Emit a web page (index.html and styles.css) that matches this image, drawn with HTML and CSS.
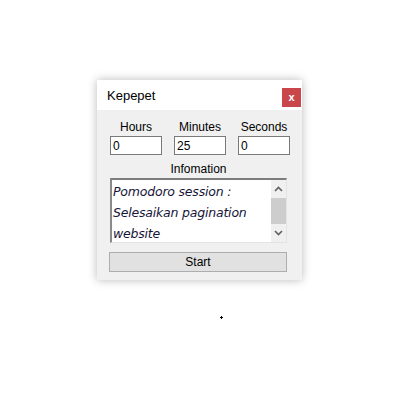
FILE: index.html
```html
<!DOCTYPE html>
<html lang="en">
  <head>
    <meta charset="UTF-8" />
    <meta name="viewport" content="width=device-width, initial-scale=1.0" />
    <title>Kepepet</title>
    <link rel="stylesheet" href="styles.css">
  </head>
  <body>
    <div class="window">
      <!-- Title bar -->
      <div class="titlebar">
        <span class="title">Kepepet</span>
        <button class="close">x</button>
      </div>

      <div class="content">
        <div class="time-grid">
          <label>Hours</label>
          <label>Minutes</label>
          <label>Seconds</label>
          <div class="field">0</div>
          <div class="field">25</div>
          <div class="field">0</div>
        </div>

        <div class="info-label">Infomation</div>
        <div class="info-box">
          <div class="info-text">Pomodoro session :<br>Selesaikan pagination<br>website</div>
          <div class="scrollbar">
            <div class="arrow">
              <svg width="9" height="6" viewBox="0 0 9 6"><path d="M1 5 L4.5 1.5 L8 5" fill="none" stroke="#606060" stroke-width="1.6"/></svg>
            </div>
            <div class="thumb"></div>
            <div class="track"></div>
            <div class="arrow">
              <svg width="9" height="6" viewBox="0 0 9 6"><path d="M1 1 L4.5 4.5 L8 1" fill="none" stroke="#606060" stroke-width="1.6"/></svg>
            </div>
          </div>
        </div>

        <button class="start">Start</button>
      </div>
    </div>

    <div class="cursor"></div>
  </body>
</html>
```

FILE: styles.css
```css
/* Basic styling */
body {
  font-family: "Liberation Sans", Arial, sans-serif;
  font-size: 12px;
  background-color: #fff;
  color: #000;
  margin: 0;
  padding: 0;
  width: 400px;
  height: 400px;
  position: relative;
}

.window {
  margin: 80px 0 0 97px;
  width: 205px;
  background-color: #f0f0f0;
  box-shadow: 0 0 9px rgba(0, 0, 0, 0.28);
}

.titlebar {
  height: 30px;
  background-color: #fff;
  display: flex;
  justify-content: space-between;
  padding-left: 10px;
  padding-right: 1px;
}

.title {
  font-size: 13px;
  line-height: 32px;
}

.close {
  margin-top: 8px;
  width: 19px;
  height: 19px;
  border: none;
  padding: 0;
  background-color: #c9474a;
  color: #fff;
  font-family: "Liberation Sans", Arial, sans-serif;
  font-size: 11px;
  font-weight: bold;
  line-height: 17px;
}

.content {
  padding: 10px 15px 8px 13px;
}

.time-grid {
  display: grid;
  grid-template-columns: repeat(3, 52px);
  column-gap: 12px;
  row-gap: 2px;
}

.time-grid label {
  text-align: center;
  line-height: 14px;
}

.field {
  height: 17px;
  border: 1px solid #7a7a7a;
  background-color: #fff;
  padding-left: 2px;
  line-height: 18px;
}

.info-label {
  text-align: center;
  line-height: 14px;
  margin-top: 7px;
}

.info-box {
  margin-top: 2px;
  width: 174px;
  height: 62px;
  display: flex;
  background-color: #fff;
  border-top: 2px solid #7d7d7d;
  border-left: 2px solid #8a8a8a;
  border-right: 1px solid #e3e3e3;
  border-bottom: 1px solid #e3e3e3;
}

.info-text {
  flex: 1;
  padding: 1px 0 0 1px;
  font-family: "DejaVu Sans", sans-serif;
  font-style: italic;
  font-size: 12.5px;
  line-height: 21px;
  color: #151538;
  letter-spacing: -0.2px;
}

.scrollbar {
  width: 15px;
  display: flex;
  flex-direction: column;
  background-color: #f0f0f0;
}

.arrow {
  height: 18px;
  display: flex;
  align-items: center;
  justify-content: center;
}

.thumb {
  height: 27px;
  background-color: #cdcdcd;
}

.track {
  flex: 1;
}

.start {
  display: block;
  margin-top: 9px;
  margin-left: -1px;
  width: 178px;
  height: 20px;
  padding: 0;
  border: 1px solid #adadad;
  background-color: #e1e1e1;
  font-family: "Liberation Sans", Arial, sans-serif;
  font-size: 12px;
  color: #000;
}

/* mouse pointer left on the screen */
.cursor {
  position: absolute;
  left: 220px;
  top: 316px;
  width: 3px;
  height: 3px;
  background:
    linear-gradient(#000, #000) center / 3px 1px no-repeat,
    linear-gradient(#000, #000) center / 1px 3px no-repeat;
}
```
